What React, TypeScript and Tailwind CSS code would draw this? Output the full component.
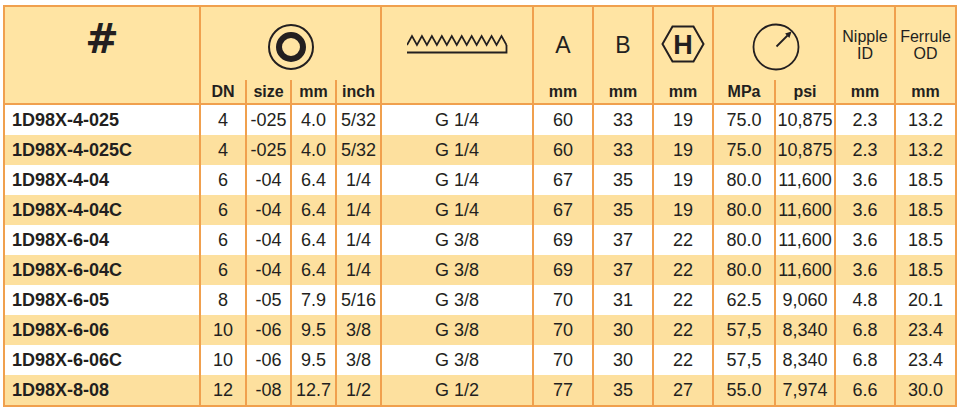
import React from "react";

// column template shared by header and body so the rules line up
const cols =
  "grid grid-cols-[194px_46px_45px_45px_45px_152px_60px_60px_60px_62px_60px_60px_61px]";

const rows: string[][] = [
  ["1D98X-4-025", "4", "-025", "4.0", "5/32", "G 1/4", "60", "33", "19", "75.0", "10,875", "2.3", "13.2"],
  ["1D98X-4-025C", "4", "-025", "4.0", "5/32", "G 1/4", "60", "33", "19", "75.0", "10,875", "2.3", "13.2"],
  ["1D98X-4-04", "6", "-04", "6.4", "1/4", "G 1/4", "67", "35", "19", "80.0", "11,600", "3.6", "18.5"],
  ["1D98X-4-04C", "6", "-04", "6.4", "1/4", "G 1/4", "67", "35", "19", "80.0", "11,600", "3.6", "18.5"],
  ["1D98X-6-04", "6", "-04", "6.4", "1/4", "G 3/8", "69", "37", "22", "80.0", "11,600", "3.6", "18.5"],
  ["1D98X-6-04C", "6", "-04", "6.4", "1/4", "G 3/8", "69", "37", "22", "80.0", "11,600", "3.6", "18.5"],
  ["1D98X-6-05", "8", "-05", "7.9", "5/16", "G 3/8", "70", "31", "22", "62.5", "9,060", "4.8", "20.1"],
  ["1D98X-6-06", "10", "-06", "9.5", "3/8", "G 3/8", "70", "30", "22", "57,5", "8,340", "6.8", "23.4"],
  ["1D98X-6-06C", "10", "-06", "9.5", "3/8", "G 3/8", "70", "30", "22", "57,5", "8,340", "6.8", "23.4"],
  ["1D98X-8-08", "12", "-08", "12.7", "1/2", "G 1/2", "77", "35", "27", "55.0", "7,974", "6.6", "30.0"],
];

const line = "border-l-2 border-[#f0a04e]";

function RingIcon() {
  return (
    <svg width="50" height="50" viewBox="0 0 50 50">
      <circle cx="25" cy="25" r="22" fill="none" stroke="#231f20" strokeWidth="2" />
      <circle cx="25" cy="25" r="12" fill="none" stroke="#231f20" strokeWidth="6" />
    </svg>
  );
}

function ThreadIcon() {
  // ten teeth, closed by a vertical drop onto the base line
  const pts: string[] = [];
  for (let i = 0; i <= 20; i++) {
    pts.push(`${(i * 99.5) / 20},${i % 2 === 0 ? 11 : 2}`);
  }
  return (
    <svg width="101" height="21" viewBox="0 0 101 21">
      <polyline
        points={pts.join(" ")}
        fill="none"
        stroke="#231f20"
        strokeWidth="1.7"
        strokeLinejoin="miter"
      />
      <polyline points="99.5,11 99.5,18.5 0,18.5" fill="none" stroke="#231f20" strokeWidth="1.8" />
    </svg>
  );
}

function HexIcon() {
  return (
    <svg width="44" height="38" viewBox="0 0 44 38">
      <polygon
        points="1.5,19 11.5,1.5 32.5,1.5 42.5,19 32.5,36.5 11.5,36.5"
        fill="none"
        stroke="#231f20"
        strokeWidth="2"
      />
      <text
        x="22"
        y="28.5"
        textAnchor="middle"
        fontFamily="'Liberation Sans', Arial, sans-serif"
        fontWeight="700"
        fontSize="27"
        fill="#231f20"
      >
        H
      </text>
    </svg>
  );
}

function GaugeIcon() {
  return (
    <svg width="48" height="48" viewBox="0 0 48 48">
      <circle cx="24" cy="24" r="22.5" fill="none" stroke="#231f20" strokeWidth="1.8" />
      <line x1="24.5" y1="23.5" x2="35.5" y2="12.5" stroke="#231f20" strokeWidth="1.8" />
      <polygon points="39.5,8.5 37.4,14.9 33.1,10.6" fill="#231f20" />
    </svg>
  );
}

function Sub({ children }: { children: React.ReactNode }) {
  return (
    <div className={`${line} flex items-center justify-center text-[16px] font-bold`}>
      {children}
    </div>
  );
}

export default function App() {
  return (
    <div className="min-h-screen bg-white pt-[5px] pl-[3px] font-['Liberation_Sans',Arial,sans-serif] text-[#231f20]">
      <div className="w-[954px] border-2 border-[#f0a04e]">
        {/* header */}
        <div className={`${cols} grid-rows-[73px_23px] border-b-2 border-[#f0a04e] bg-[#ffe4a3]`}>
          <div className="row-span-2 flex flex-col">
            <div className="flex h-[73px] items-center justify-center pb-[10px] font-['DejaVu_Sans',sans-serif] text-[40px] leading-none font-bold">
              #
            </div>
          </div>
          <div className={`${line} col-span-4 flex items-center justify-center pt-[7px]`}>
            <RingIcon />
          </div>
          <div className={`${line} row-span-2 flex flex-col`}>
            <div className="flex h-[73px] items-center justify-center pt-[1px] pl-[1px]">
              <ThreadIcon />
            </div>
          </div>
          <div className={`${line} flex items-center justify-center pt-[4px] text-[23px] leading-none`}>A</div>
          <div className={`${line} flex items-center justify-center pt-[4px] text-[23px] leading-none`}>B</div>
          <div className={`${line} flex items-center justify-center`}>
            <HexIcon />
          </div>
          <div className={`${line} col-span-2 flex items-center justify-center pt-[6px] pl-[4px]`}>
            <GaugeIcon />
          </div>
          <div className={`${line} flex flex-col items-center justify-center pt-[3px] text-[16px] leading-[17px]`}>
            <span>Nipple</span>
            <span>ID</span>
          </div>
          <div className={`${line} flex flex-col items-center justify-center pt-[3px] text-[16px] leading-[17px]`}>
            <span>Ferrule</span>
            <span>OD</span>
          </div>

          <Sub>DN</Sub>
          <Sub>size</Sub>
          <Sub>mm</Sub>
          <Sub>inch</Sub>
          <Sub>mm</Sub>
          <Sub>mm</Sub>
          <Sub>mm</Sub>
          <Sub>MPa</Sub>
          <Sub>psi</Sub>
          <Sub>mm</Sub>
          <Sub>mm</Sub>
        </div>

        {/* body */}
        {rows.map((r, i) => (
          <div
            key={r[0]}
            className={`${cols} h-[30px] text-[18px] leading-none ${i % 2 === 0 ? "bg-white" : "bg-[#fde09e]"}`}
          >
            <div className="flex items-center pl-[7px] font-bold">{r[0]}</div>
            {r.slice(1).map((v, j) => (
              <div key={j} className={`${line} flex items-center justify-center whitespace-nowrap`}>
                {v}
              </div>
            ))}
          </div>
        ))}
      </div>
    </div>
  );
}
